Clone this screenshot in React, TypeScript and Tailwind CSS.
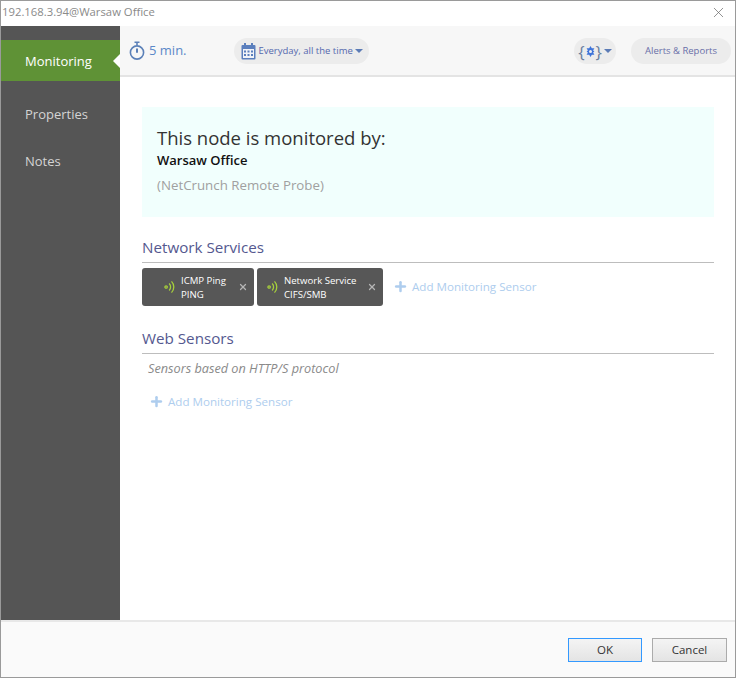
import { X, Plus } from 'lucide-react'

const font = { fontFamily: '"Open Sans", "Noto Sans", sans-serif' }

function Caret() {
  return <span className="ml-[2px] h-0 w-0 border-x-[4px] border-t-[4px] border-x-transparent border-t-[#5b7bb5]" />
}

function Stopwatch() {
  return (
    <svg width="16" height="20" viewBox="0 0 16 20" fill="none" stroke="#5b80b8" strokeWidth="1.6">
      <path d="M5.5 1.2h5M8 1.2v3" />
      <circle cx="8" cy="11.5" r="6.6" />
      <path d="M8 7.5v4.2" strokeWidth="2" />
    </svg>
  )
}

function CalendarIcon() {
  return (
    <svg width="15" height="17" viewBox="0 0 15 17">
      <rect x="0.5" y="2" width="14" height="14.5" rx="1" fill="#5b7fbd" />
      <rect x="2" y="6" width="11" height="9" fill="#f1f3f8" />
      <rect x="3" y="0" width="2" height="3.5" fill="#5b7fbd" />
      <rect x="10" y="0" width="2" height="3.5" fill="#5b7fbd" />
      <g fill="#5b7fbd">
        <rect x="3" y="7.5" width="2" height="2" />
        <rect x="6.5" y="7.5" width="2" height="2" />
        <rect x="10" y="7.5" width="2" height="2" />
        <rect x="3" y="11" width="2" height="2" />
        <rect x="6.5" y="11" width="2" height="2" />
        <rect x="10" y="11" width="2" height="2" />
      </g>
    </svg>
  )
}

function GearBraces() {
  return (
    <span className="flex items-center text-[17px] leading-none text-[#6b7f9f]">
      <span>{'{'}</span>
      <svg width="11" height="11" viewBox="0 0 11 11">
        <path d="M5.5 0l1.3 2.2h2.6L8.1 4.4l1.3 1.1-1.3 1.1 1.3 2.2H6.8L5.5 11 4.2 8.8H1.6l1.3-2.2-1.3-1.1 1.3-1.1-1.3-2.2h2.6z" fill="#3f74d9" />
        <circle cx="5.5" cy="5.5" r="1.5" fill="#eef0f4" />
      </svg>
      <span>{'}'}</span>
    </span>
  )
}

function Signal() {
  return (
    <svg width="11" height="14" viewBox="0 0 10 14" fill="none" stroke="#a6cf3c" strokeWidth="1.3" className="shrink-0">
      <circle cx="1.6" cy="7" r="1.2" />
      <path d="M4.6 3.6a4.6 4.6 0 0 1 0 6.8" />
      <path d="M7 1.4a8 8 0 0 1 0 11.2" />
    </svg>
  )
}

function Chip({ name, sub, className }: { name: string; sub: string; className: string }) {
  return (
    <div className={`flex h-[38px] items-center rounded-[3px] bg-[#575757] pr-[6px] text-[9.6px] leading-[14px] text-white ${className}`}>
      <Signal />
      <div className="ml-[6px] flex-1 whitespace-nowrap pt-[1px]">
        <div>{name}</div>
        <div>{sub}</div>
      </div>
      <X size={10} strokeWidth={3} className="shrink-0 text-[#b5b5b5]" />
    </div>
  )
}

function AddSensor() {
  return (
    <div className="flex items-center text-[11.6px] text-[#aecdee]">
      <Plus size={15} strokeWidth={4} className="mr-[4px] -ml-[1px] text-[#aecdee]" />
      Add Monitoring Sensor
    </div>
  )
}

function Heading({ children }: { children: string }) {
  return (
    <div className="border-b border-[#bdbdbd] pb-[5px] text-[15.2px] leading-[20px] text-[#54588f]">
      {children}
    </div>
  )
}

export default function App() {
  return (
    <div className="flex h-[678px] w-[736px] flex-col overflow-hidden border border-[#9a9a9a] bg-white" style={font}>
      {/* title bar */}
      <div className="flex h-[25px] shrink-0 items-center justify-between pb-[2px] pl-[1px] pr-[8px] text-[11.3px] text-[#8a8a8a]">
        <span>192.168.3.94@Warsaw Office</span>
        <X size={17} strokeWidth={1} className="text-[#666]" />
      </div>

      <div className="flex min-h-0 flex-1">
        {/* sidebar */}
        <div className="w-[119px] shrink-0 bg-[#555555] pt-[14px] text-[13px] font-medium text-[#d4d4d4]">
          <div className="relative flex h-[41px] items-center bg-[#5f9236] pl-[24px] pt-[2px] text-white">
            Monitoring
            <span className="absolute right-0 top-[14px] h-0 w-0 border-y-[7px] border-r-[7px] border-y-transparent border-r-white" />
          </div>
          <div className="mt-[23px] pl-[24px] leading-[20px]">Properties</div>
          <div className="mt-[27px] pl-[24px] leading-[20px]">Notes</div>
        </div>

        {/* main */}
        <div className="flex min-w-0 flex-1 flex-col">
          <div className="flex h-[51px] shrink-0 items-center border-b-2 border-[#e4e4e4] bg-[#f7f7f7] pl-[9px] pr-[4px] pt-[1px]">
            <Stopwatch />
            <span className="ml-[4px] text-[13px] text-[#5b88c8]">5 min.</span>
            <div className="ml-[47px] flex h-[26px] items-center rounded-full bg-[#ececec] pl-[7px] pr-[6px] text-[9.5px] text-[#5468ae]">
              <CalendarIcon />
              <span className="ml-[3px]">Everyday, all the time</span>
              <Caret />
            </div>
            <div className="ml-auto flex h-[26px] w-[42px] items-center justify-center rounded-full bg-[#ececec]">
              <GearBraces />
              <Caret />
            </div>
            <div className="ml-[15px] flex h-[26px] w-[100px] items-center justify-center rounded-full bg-[#ececec] text-[9.5px] text-[#6a6fa8]">
              Alerts &amp; Reports
            </div>
          </div>

          <div className="flex-1 pl-[22px] pr-[21px] pt-[30px]">
            <div className="flex h-[110px] flex-col bg-[#f1fffd] px-[15px] pt-[19px]">
              <div className="text-[18.5px] font-medium leading-[24px] text-[#333]">This node is monitored by:</div>
              <div className="text-[13px] font-semibold leading-[20px] text-[#111]">Warsaw Office</div>
              <div className="mt-[6px] text-[13.3px] leading-[18px] text-[#a0a0a0]">(NetCrunch Remote Probe)</div>
            </div>

            <div className="mt-[20px]">
              <Heading>Network Services</Heading>
              <div className="mt-[5px] flex items-center">
                <Chip name="ICMP Ping" sub="PING" className="w-[112px] pl-[22px]" />
                <Chip name="Network Service" sub="CIFS/SMB" className="ml-[3px] w-[126px] pl-[10px]" />
                <div className="ml-[11px]">
                  <AddSensor />
                </div>
              </div>
            </div>

            <div className="mt-[22px]">
              <Heading>Web Sensors</Heading>
              <div className="mt-[5px] pl-[6px] text-[12.7px] italic leading-[18px] text-[#8a8a8a]">
                Sensors based on HTTP/S protocol
              </div>
              <div className="mt-[16px] pl-[8px]">
                <AddSensor />
              </div>
            </div>
          </div>
        </div>
      </div>

      {/* footer */}
      <div className="flex h-[57px] shrink-0 items-start justify-end gap-[10px] border-t-2 border-[#e8e8e8] bg-[#fafafa] pr-[8px] pt-[16px] text-[11.5px] text-[#333]">
        <button className="h-[24px] w-[74px] border border-[#3399ff] bg-gradient-to-b from-[#f4f4f4] to-[#e4e4e4]">OK</button>
        <button className="h-[24px] w-[75px] border border-[#ababab] bg-gradient-to-b from-[#f4f4f4] to-[#e4e4e4]">Cancel</button>
      </div>
    </div>
  )
}
